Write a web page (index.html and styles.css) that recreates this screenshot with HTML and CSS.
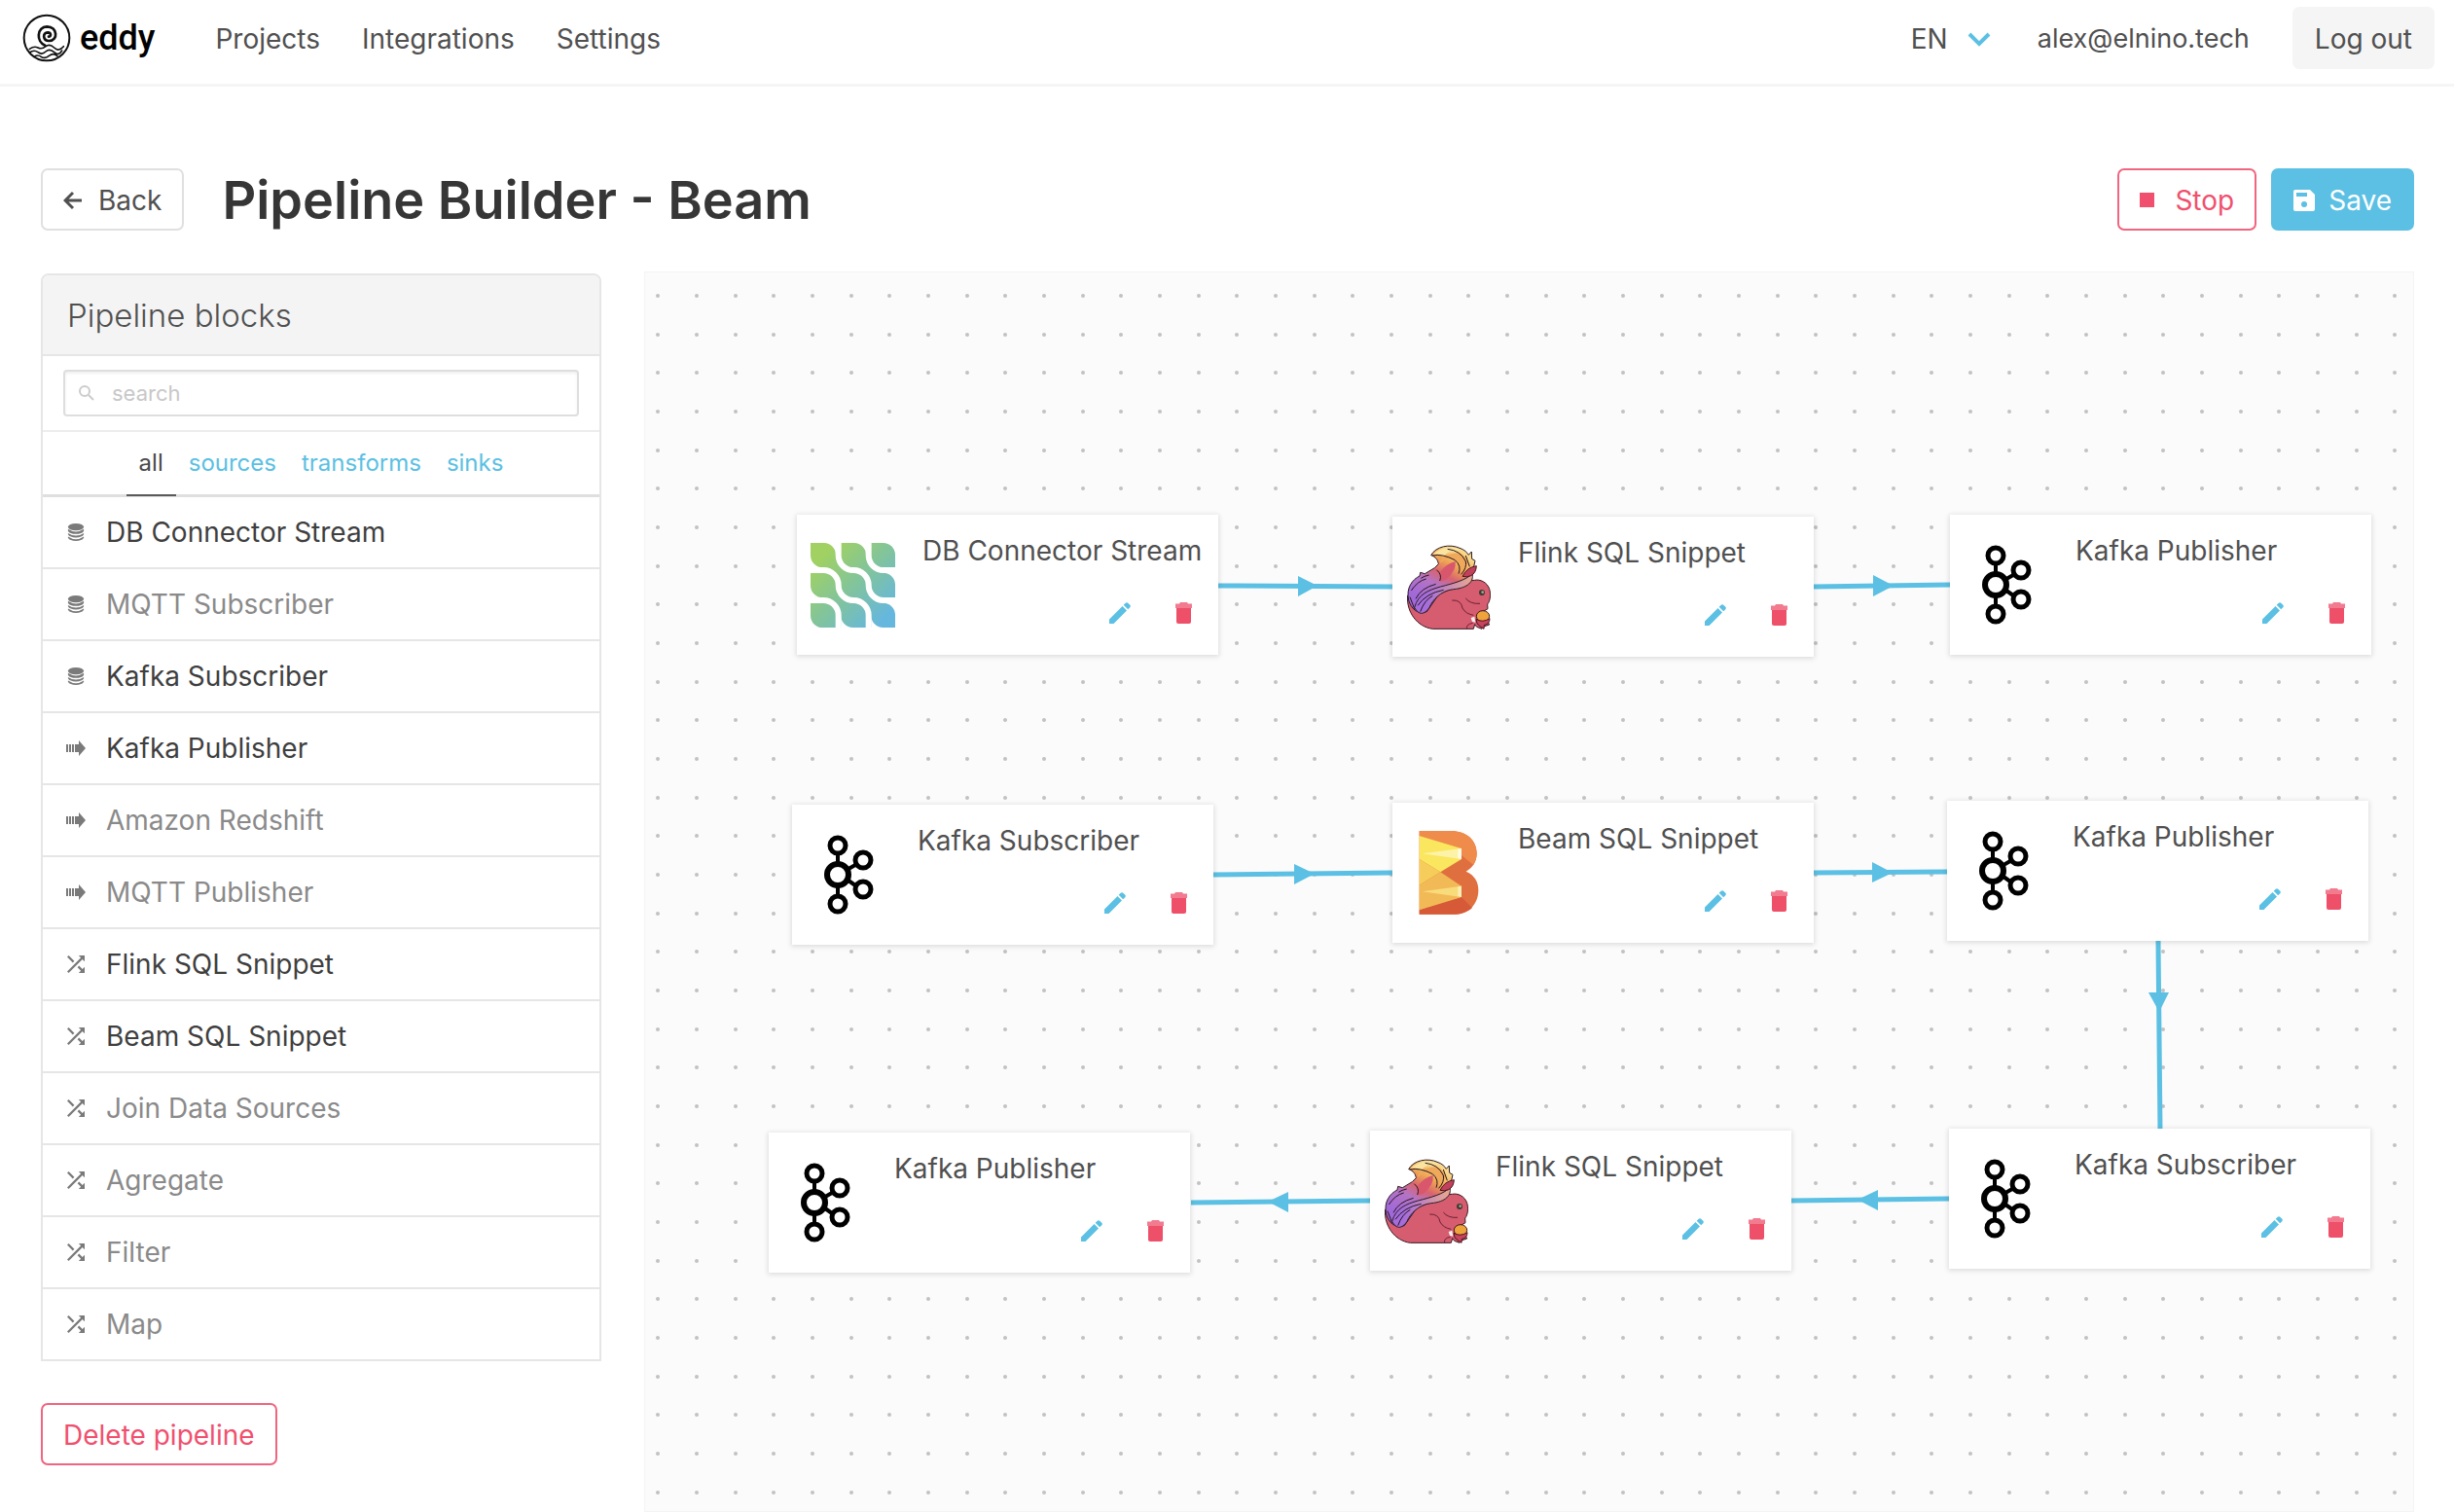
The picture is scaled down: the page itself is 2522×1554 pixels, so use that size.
FILE: index.html
```html
<!DOCTYPE html>
<html lang="en">
<head>
<meta charset="utf-8">
<title>Pipeline Builder - Beam</title>
<link rel="stylesheet" href="styles.css">
</head>
<body>
<svg class="sprite" aria-hidden="true">
  <defs>
    <linearGradient id="db-fill" x1="0" y1="0" x2="1" y2="1">
      <stop offset="0.15" stop-color="#a0d162"/>
      <stop offset="0.5" stop-color="#82c49b"/>
      <stop offset="0.88" stop-color="#66b7dd"/>
    </linearGradient>
    <linearGradient id="tail-fill" x1="0.75" y1="0" x2="0.2" y2="1">
      <stop offset="0.08" stop-color="#f8d78a"/>
      <stop offset="0.25" stop-color="#efa653"/>
      <stop offset="0.42" stop-color="#d9636f"/>
      <stop offset="0.58" stop-color="#b573c4"/>
      <stop offset="0.85" stop-color="#a168d8"/>
    </linearGradient>
    <linearGradient id="sweep-fill" x1="0" y1="0" x2="1" y2="0">
      <stop offset="0.2" stop-color="#a56cdc"/>
      <stop offset="1" stop-color="#e8a98f"/>
    </linearGradient>
  </defs>

  <symbol id="i-database" viewBox="0 0 20 20">
    <ellipse cx="10" cy="4" rx="9" ry="4"/>
    <path d="M1 6.5Q10 12.5 19 6.5V8.5Q17 12 10 12T1 8.500ZM1 11Q10 17 19 11V12.500Q17 16 10 16T1 12.500ZM1 15Q10 21 19 15V16.500Q17 20 10 20T1 16.500Z"/>
  </symbol>
  <symbol id="i-sink" viewBox="0 0 20 16">
    <path d="M0 4H2V12H0ZM3 4H5V12H3ZM6 4H8V12H6ZM9 4H13V0L20 8L13 16V12H9Z"/>
  </symbol>
  <symbol id="i-shuffle" viewBox="4 4 16 16">
    <path d="M10.59 9.17 5.41 4 4 5.41l5.17 5.17 1.42-1.41zM14.5 4l2.04 2.04L4 18.59 5.41 20 17.96 7.46 20 9.5V4h-5.5zm.33 9.41-1.41 1.41 3.13 3.13L14.5 20H20v-5.5l-2.04 2.04-3.13-3.13z"/>
  </symbol>
  <symbol id="i-pencil" viewBox="0 0 22 22">
    <path d="M0 22V17.500L13.500 4L18 8.500L4.500 22ZM14.700 2.800L16.800 0.700Q18 -0.300 19.200 0.700L21.300 2.800Q22.300 4 21.300 5.200L19.200 7.300Z"/>
  </symbol>
  <symbol id="i-trash" viewBox="0 0 17 22">
    <path d="M1 6H16V20Q16 22 14 22H3Q1 22 1 20Z"/>
    <path d="M5 0H12L13 1.500H17V6H0V1.500H4Z" opacity=".75"/>
  </symbol>

  <symbol id="logo-db" viewBox="99 174 261 261">
    <path fill="url(#db-fill)" d="M99 174H360V435H99Z"/>
    <g fill="none" stroke="#fff" stroke-width="18">
      <path d="M99 258H138A46 46 0 0 1 185 304A46 46 0 0 0 231 351A46 46 0 0 1 278 397V435"/>
      <path d="M185 174V212A46 46 0 0 0 231 258A46 46 0 0 1 278 304A46 46 0 0 0 324 351H360"/>
      <path d="M278 174V212A46 46 0 0 0 324 258H360M99 351H138A46 46 0 0 1 185 397V435"/>
    </g>
    <path fill="#fff" d="M139 174H177V211A37 37 0 0 0 139 174ZM232 174H270V211A37 37 0 0 0 232 174ZM323 174H360V211A37 37 0 0 0 323 174ZM323 266H360V304A37 37 0 0 0 323 266ZM323 359H360V397A37 37 0 0 0 323 359ZM99 212V250H138A38 38 0 0 1 99 212ZM99 305V343H138A38 38 0 0 1 99 305ZM99 398V435H136A37 37 0 0 1 99 398ZM193 398V435H231A37 37 0 0 1 193 398ZM286 398V435H324A37 37 0 0 1 286 398Z"/>
  </symbol>

  <symbol id="logo-kafka" viewBox="0 0 87 87">
    <g fill="none" stroke="#000">
      <path stroke-width="4" d="M33 22V31M33 55V65M44 37L51 33M44 49L51 54"/>
      <circle cx="33" cy="43" r="11" stroke-width="6"/>
      <g stroke-width="5">
        <circle cx="33" cy="13" r="8"/>
        <circle cx="33" cy="73" r="8"/>
        <circle cx="59" cy="28" r="8"/>
        <circle cx="59" cy="58" r="8"/>
      </g>
    </g>
  </symbol>

  <symbol id="logo-flink" viewBox="134 179 261 261">
    <path fill="#d65c70" stroke="#3a1a22" stroke-width="3" d="M139 335C134 385 168 432 216 438H342L346 424L352 432L368 438L376 430L391 425L384 412L366 388L386 376L385 362C394 352 396 330 391 315C384 294 362 284 345 288L300 290L160 320Z"/>
    <path fill="url(#tail-fill)" stroke="#2c1c24" stroke-width="3" d="M142 350C133 310 155 285 176 275L178 264L192 268L222 250L234 238C232 226 226 216 211 211C226 184 268 174 302 190C314 194 322 202 327 210L336 200L337 222L347 228L342 250C340 272 330 288 312 300L236 330L198 385C168 395 150 375 142 350Z"/>
    <path fill="#fbe3a0" d="M217 209C236 186 280 180 308 196C280 193 262 200 250 214Q236 204 217 209Z"/>
    <path fill="#f0a95a" d="M240 228Q262 202 300 204Q322 214 326 236Q310 262 300 262Q304 226 270 220Q252 222 240 236Z"/>
    <path fill="#d9576c" d="M240 262Q256 238 286 230Q290 258 258 286L240 292Z"/>
    <path fill="url(#sweep-fill)" stroke="#2c1c24" stroke-width="3" d="M160 372C172 330 205 318 240 308C280 298 318 288 338 268C344 290 326 312 280 316C240 320 214 352 206 372C192 392 176 400 160 372Z"/>
    <path fill="#c2405c" stroke="#4a1522" stroke-width="3" d="M308 276Q322 248 351 244Q350 266 334 274Q322 280 308 276Z"/>
    <path fill="none" stroke="#241820" stroke-width="3" d="M215 212Q245 205 285 226Q306 244 296 268M262 192Q302 196 318 230Q322 250 304 270M180 282Q190 275 205 272M150 320Q170 290 196 284M164 345Q180 312 226 300M170 366Q196 328 250 318M178 385Q190 350 216 336M146 340L160 376M228 256Q246 270 238 290M318 212L330 246"/>
    <path fill="none" stroke="#6a2231" stroke-width="3" d="M276 350Q304 348 308 374Q318 392 342 396M318 344Q332 362 362 360M322 438Q318 424 340 420"/>
    <path fill="#f3f0ee" d="M334 404L345 400L348 418L338 416Z"/>
    <ellipse cx="371" cy="399" rx="20" ry="17" fill="#efa33d" stroke="#3a1a12" stroke-width="3"/>
    <path fill="#c9445c" stroke="#4a1522" stroke-width="3" d="M350 408Q370 420 392 406Q392 424 375 426L374 438L362 430Q350 424 350 408Z"/>
    <circle cx="368" cy="326" r="9" fill="#3d3a33"/>
    <circle cx="370" cy="325" r="4" fill="#a8a488"/>
  </symbol>

  <symbol id="logo-beam" viewBox="134 163 261 261">
    <path fill="#e06f3f" d="M175 163H268C325 163 352 195 352 232C352 258 340 275 319 288C345 299 357 320 357 345C357 390 325 420 285 420H175Z"/>
    <path fill="#ef8b4b" d="M175 163H268C325 163 352 195 352 232C352 246 348 258 342 268L305 238V217L175 178Z"/>
    <path fill="#d65a37" d="M175 420H285C305 420 325 412 338 400L305 367L175 407Z"/>
    <path fill="#fbe65f" d="M175 178L305 217V250L240 290L175 250Z"/>
    <path fill="#f6cd5a" d="M175 250L240 290L175 330Z"/>
    <path fill="#f2ba57" d="M175 330L240 290L305 333V367L175 407Z"/>
    <path fill="#fdf3a8" d="M185 233L305 217V250Z"/>
    <path fill="#f8dc7c" d="M185 350L305 333V367Z"/>
    <path fill="#fffbe4" d="M294 219L305 217V250L294 247Z"/>
    <path fill="#fbeeb4" d="M294 335L305 333V367L294 364Z"/>
  </symbol>
</svg>

<header class="topbar">
  <a class="brand" href="#">
    <svg class="brand-mark" viewBox="40 43 150 150" aria-hidden="true">
      <g fill="none" stroke="#111" stroke-linecap="round">
        <circle cx="115" cy="118" r="70" stroke-width="6"/>
        <path stroke-width="8" d="M110 141C82 130 84 84 116 83C148 83 152 126 122 127C102 127 102 101 118 101C130 102 129 114 121 114"/>
        <path stroke-width="5" d="M62 152Q76 142 88 148T112 144T138 148T167 144M62 163Q76 153 88 162T112 160T138 162T162 157M76 176Q88 168 98 176T122 173T148 174"/>
      </g>
    </svg>
    <span>eddy</span>
  </a>
  <nav class="menu" aria-label="Main">
    <a href="#">Projects</a>
    <a href="#">Integrations</a>
    <a href="#">Settings</a>
  </nav>
  <div class="account">
    <div class="language">
      <select aria-label="Language"><option>EN</option></select>
      <svg viewBox="0 0 24 16" aria-hidden="true"><path d="M2 3L12 13L22 3"/></svg>
    </div>
    <a class="user" href="#">alex@elnino.tech</a>
    <button class="button button-light" type="button">Log out</button>
  </div>
</header>

<main>
  <div class="toolbar">
    <button class="button" type="button">
      <svg class="icon-back" viewBox="0 0 20 20" aria-hidden="true"><path d="M19 10H2M10 2L2 10L10 18"/></svg>
      Back
    </button>
    <h1>Pipeline Builder - Beam</h1>
    <div class="actions">
      <button class="button button-danger" type="button"><span class="icon-stop"></span>Stop</button>
      <button class="button button-info" type="button">
        <svg class="icon-save" viewBox="0 0 22 22" aria-hidden="true"><path fill="#fff" d="M2 0H17L22 5V20Q22 22 20 22H2Q0 22 0 20V2Q0 0 2 0Z"/><path fill="#5bc0e3" d="M3 3H14V7H3Z"/><circle cx="11" cy="15" r="3" fill="#5bc0e3"/></svg>
        Save
      </button>
    </div>
  </div>

  <div class="workspace">
    <aside class="sidebar">
      <section class="panel">
        <h2>Pipeline blocks</h2>
        <div class="search">
          <svg viewBox="0 0 16 16" aria-hidden="true"><circle cx="6" cy="6" r="5"/><path d="M10 10L15 15"/></svg>
          <input type="text" placeholder="search" aria-label="Search blocks">
        </div>
        <nav class="tabs" aria-label="Block type">
          <a class="active" href="#">all</a>
          <a href="#">sources</a>
          <a href="#">transforms</a>
          <a href="#">sinks</a>
        </nav>
        <ul class="blocks">
          <li><svg><use href="#i-database"/></svg>DB Connector Stream</li>
          <li class="muted"><svg><use href="#i-database"/></svg>MQTT Subscriber</li>
          <li><svg><use href="#i-database"/></svg>Kafka Subscriber</li>
          <li><svg><use href="#i-sink"/></svg>Kafka Publisher</li>
          <li class="muted"><svg><use href="#i-sink"/></svg>Amazon Redshift</li>
          <li class="muted"><svg><use href="#i-sink"/></svg>MQTT Publisher</li>
          <li><svg><use href="#i-shuffle"/></svg>Flink SQL Snippet</li>
          <li><svg><use href="#i-shuffle"/></svg>Beam SQL Snippet</li>
          <li class="muted"><svg><use href="#i-shuffle"/></svg>Join Data Sources</li>
          <li class="muted"><svg><use href="#i-shuffle"/></svg>Agregate</li>
          <li class="muted"><svg><use href="#i-shuffle"/></svg>Filter</li>
          <li class="muted"><svg><use href="#i-shuffle"/></svg>Map</li>
        </ul>
      </section>
      <button class="button button-danger" type="button">Delete pipeline</button>
    </aside>

    <section class="canvas" aria-label="Pipeline">
      <svg class="edges" aria-hidden="true">
        <defs>
          <pattern id="grid" width="119" height="119" patternUnits="userSpaceOnUse">
            <g fill="#c2c2c2">
              <circle cx="14" cy="25" r="2"/><circle cx="54" cy="25" r="2"/><circle cx="94" cy="25" r="2"/>
              <circle cx="14" cy="65" r="2"/><circle cx="54" cy="65" r="2"/><circle cx="94" cy="65" r="2"/>
              <circle cx="14" cy="104" r="2"/><circle cx="54" cy="104" r="2"/><circle cx="94" cy="104" r="2"/>
            </g>
          </pattern>
        </defs>
        <rect width="100%" height="100%" fill="url(#grid)"/>
        <g stroke="#5bc0e3" stroke-width="5">
          <path d="M590 323L769 324M1202 324L1342 322M585 620L769 618M1202 618L1339 617M1556 688L1558 882M1341 953L1179 955M746 955L562 957"/>
        </g>
        <path fill="#5bc0e3" d="M672 313L692 323L672 334ZM1263 312L1284 323L1263 334ZM668 609L689 619L668 630ZM1262 607L1283 618L1262 628ZM1546 741H1567L1557 761ZM1268 944V965L1247 954ZM662 946V967L641 956Z"/>
      </svg>

      <article class="node" style="left:157px;top:250px"><svg class="logo"><use href="#logo-db"/></svg><h3>DB Connector Stream</h3><div class="tools"><button type="button" aria-label="Edit"><svg class="pencil"><use href="#i-pencil"/></svg></button><button type="button" aria-label="Delete"><svg class="trash"><use href="#i-trash"/></svg></button></div></article>
      <article class="node" style="left:769px;top:252px"><svg class="logo"><use href="#logo-flink"/></svg><h3>Flink SQL Snippet</h3><div class="tools"><button type="button" aria-label="Edit"><svg class="pencil"><use href="#i-pencil"/></svg></button><button type="button" aria-label="Delete"><svg class="trash"><use href="#i-trash"/></svg></button></div></article>
      <article class="node" style="left:1342px;top:250px"><svg class="logo"><use href="#logo-kafka"/></svg><h3>Kafka Publisher</h3><div class="tools"><button type="button" aria-label="Edit"><svg class="pencil"><use href="#i-pencil"/></svg></button><button type="button" aria-label="Delete"><svg class="trash"><use href="#i-trash"/></svg></button></div></article>
      <article class="node" style="left:152px;top:548px"><svg class="logo"><use href="#logo-kafka"/></svg><h3>Kafka Subscriber</h3><div class="tools"><button type="button" aria-label="Edit"><svg class="pencil"><use href="#i-pencil"/></svg></button><button type="button" aria-label="Delete"><svg class="trash"><use href="#i-trash"/></svg></button></div></article>
      <article class="node" style="left:769px;top:546px"><svg class="logo"><use href="#logo-beam"/></svg><h3>Beam SQL Snippet</h3><div class="tools"><button type="button" aria-label="Edit"><svg class="pencil"><use href="#i-pencil"/></svg></button><button type="button" aria-label="Delete"><svg class="trash"><use href="#i-trash"/></svg></button></div></article>
      <article class="node" style="left:1339px;top:544px"><svg class="logo"><use href="#logo-kafka"/></svg><h3>Kafka Publisher</h3><div class="tools"><button type="button" aria-label="Edit"><svg class="pencil"><use href="#i-pencil"/></svg></button><button type="button" aria-label="Delete"><svg class="trash"><use href="#i-trash"/></svg></button></div></article>
      <article class="node" style="left:128px;top:885px"><svg class="logo"><use href="#logo-kafka"/></svg><h3>Kafka Publisher</h3><div class="tools"><button type="button" aria-label="Edit"><svg class="pencil"><use href="#i-pencil"/></svg></button><button type="button" aria-label="Delete"><svg class="trash"><use href="#i-trash"/></svg></button></div></article>
      <article class="node" style="left:746px;top:883px"><svg class="logo"><use href="#logo-flink"/></svg><h3>Flink SQL Snippet</h3><div class="tools"><button type="button" aria-label="Edit"><svg class="pencil"><use href="#i-pencil"/></svg></button><button type="button" aria-label="Delete"><svg class="trash"><use href="#i-trash"/></svg></button></div></article>
      <article class="node" style="left:1341px;top:881px"><svg class="logo"><use href="#logo-kafka"/></svg><h3>Kafka Subscriber</h3><div class="tools"><button type="button" aria-label="Edit"><svg class="pencil"><use href="#i-pencil"/></svg></button><button type="button" aria-label="Delete"><svg class="trash"><use href="#i-trash"/></svg></button></div></article>
    </section>
  </div>
</main>
</body>
</html>
```

FILE: styles.css
```css
* {
  box-sizing: border-box;
}

body {
  display: flex;
  flex-direction: column;
  min-height: 100vh;
  margin: 0;
  background: #fff;
  color: #505050;
  font: 400 28px/40px Inter, "Liberation Sans", sans-serif;
}

a {
  color: inherit;
  text-decoration: none;
}

h1, h2, h3, ul {
  margin: 0;
  padding: 0;
}

button, select, input {
  font: inherit;
  color: inherit;
}

svg {
  display: block;
  flex: none;
}

.sprite {
  position: absolute;
  width: 0;
  height: 0;
}

/* Top bar */

.topbar {
  display: flex;
  align-items: center;
  padding: 7px 20px 15px 23px;
  border-bottom: 3px solid #f5f5f5;
}

.brand {
  display: flex;
  align-items: center;
  gap: 9px;
  color: #000;
  font: 500 36px/40px Roboto, sans-serif;
}

.brand-mark {
  width: 50px;
  height: 50px;
}

.menu {
  display: flex;
  gap: 43px;
  margin-left: 62px;
  padding-top: 2px;
}

.account {
  display: flex;
  align-items: center;
  gap: 44px;
  margin-left: auto;
}

.language {
  display: flex;
  align-items: center;
  gap: 20px;
  margin-right: 4px;
  padding-top: 2px;
}

.language select {
  padding: 0;
  border: 0;
  background: none;
  appearance: none;
}

.language svg {
  width: 24px;
  height: 16px;
  fill: none;
  stroke: #5bc0e3;
  stroke-width: 4;
}

.user {
  padding-top: 2px;
  font-size: 27px;
}

.button {
  display: inline-flex;
  align-items: center;
  height: 64px;
  padding: 1px 21px 0;
  border: 2px solid #e0e0e0;
  border-radius: 7px;
  background: #fff;
}

.button-light {
  border-color: #f5f5f5;
  background: #f5f5f5;
}

.button-danger {
  border-color: #f0657f;
  color: #f0506e;
}

.button-info {
  border-color: #5bc0e3;
  background: #5bc0e3;
  color: #fff;
}

/* Page */

main {
  display: flex;
  flex: 1;
  flex-direction: column;
  padding: 84px 41px 0 42px;
}

.toolbar {
  display: flex;
  align-items: center;
}

h1 {
  margin-left: 39px;
  padding-top: 2px;
  color: #363636;
  font-size: 54px;
  font-weight: 600;
  line-height: 62px;
}

.actions {
  display: flex;
  gap: 15px;
  margin-left: auto;
}

.icon-back {
  width: 20px;
  height: 20px;
  margin-right: 16px;
  fill: none;
  stroke: currentColor;
  stroke-width: 3;
}

.icon-stop {
  width: 15px;
  height: 15px;
  margin-right: 21px;
  background: #f0506e;
}

.icon-save {
  width: 22px;
  height: 22px;
  margin-right: 14px;
}

.workspace {
  display: flex;
  flex: 1;
  gap: 44px;
  margin-top: 42px;
}

/* Sidebar */

.sidebar {
  flex: none;
  width: 576px;
  padding: 2px 0 48px;
}

.panel {
  margin-bottom: 43px;
  border: 2px solid #e6e6e6;
  border-radius: 8px 8px 0 0;
}

.panel h2 {
  padding: 20px 25px 19px;
  border-bottom: 2px solid #e6e6e6;
  border-radius: 6px 6px 0 0;
  background: #f4f4f4;
  font-size: 33px;
  font-weight: 300;
  line-height: 42px;
}

.search {
  position: relative;
  padding: 14px 21px;
  border-bottom: 2px solid #ededed;
}

.search svg {
  position: absolute;
  left: 37px;
  top: 30px;
  width: 16px;
  height: 16px;
  fill: none;
  stroke: #ccc;
  stroke-width: 2;
}

.search input {
  display: block;
  width: 100%;
  height: 48px;
  padding: 0 48px;
  border: 2px solid #dedede;
  border-radius: 4px;
  box-shadow: inset 0 2px 3px #f0f0f0;
  font-size: 22px;
}

.search input::placeholder {
  color: #c8c8c8;
}

.tabs {
  display: flex;
  justify-content: center;
  border-bottom: 3px solid #dfdfdf;
  color: #5bc0e3;
  font-size: 24px;
}

.tabs a {
  margin-bottom: -2px;
  padding: 12px 13px;
  border-bottom: 2px solid transparent;
}

.tabs .active {
  border-color: #5a5a5a;
  color: #4a4a4a;
}

.blocks {
  list-style: none;
}

.blocks li {
  display: flex;
  align-items: center;
  gap: 21px;
  height: 74px;
  padding: 0 24px;
  border-bottom: 2px solid #e6e6e6;
  color: #3f3f3f;
}

.blocks li:last-child {
  height: 72px;
  border-bottom: 0;
}

.blocks .muted {
  color: #8a8a8a;
}

.blocks svg {
  width: 20px;
  height: 18px;
  fill: #7a7a7a;
}

/* Canvas */

.canvas {
  position: relative;
  flex: 1;
  min-width: 0;
  overflow: hidden;
  background: #fbfbfb;
  box-shadow: inset 0 0 0 1px #f4f4f4;
}

.edges {
  position: absolute;
  inset: 0;
  width: 100%;
  height: 100%;
}

.node {
  position: absolute;
  display: grid;
  grid-template-columns: 87px 1fr;
  column-gap: 28px;
  width: 433px;
  height: 144px;
  padding: 17px 14px;
  background: #fff;
  box-shadow: 0 1px 5px 1px rgba(0, 0, 0, 0.12);
}

.logo {
  grid-row: 1 / 3;
  width: 87px;
  height: 87px;
  margin-top: 12px;
}

.node h3 {
  font-size: 28px;
  font-weight: 400;
  line-height: 40px;
  white-space: nowrap;
}

.tools {
  display: flex;
  gap: 46px;
  justify-content: flex-end;
  padding: 17px 13px 0 0;
}

.tools button {
  height: 22px;
  padding: 0;
  border: 0;
  background: none;
}

.pencil {
  width: 22px;
  height: 22px;
  fill: #5bc0e3;
}

.trash {
  width: 17px;
  height: 22px;
  fill: #ee4f69;
}
```
